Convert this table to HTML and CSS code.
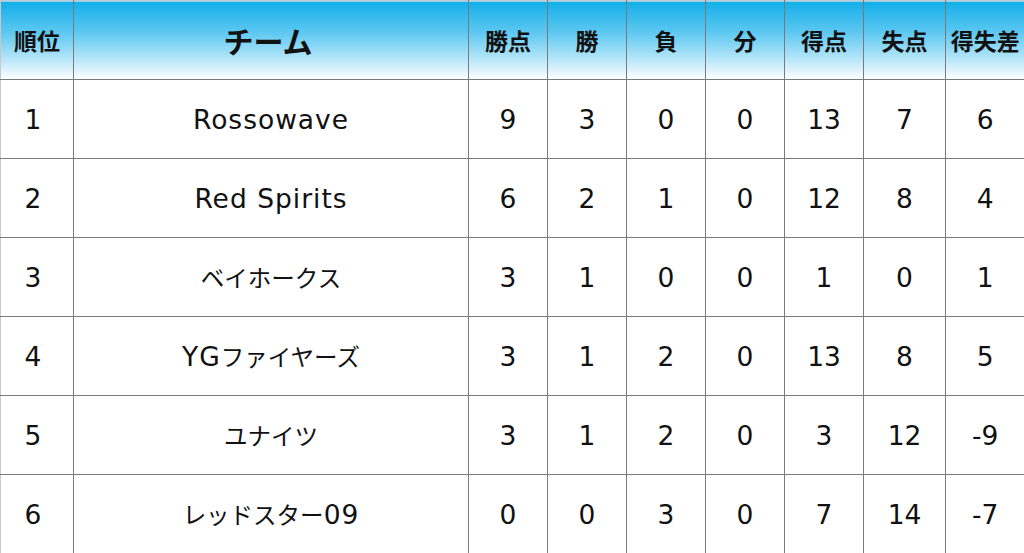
FILE: index.html
```html
<!DOCTYPE html>
<html lang="ja">
<head>
<meta charset="utf-8">
<link rel="stylesheet" href="styles.css">
</head>
<body>
<table class="standings">
  <colgroup>
    <col class="c-rank"><col class="c-team"><col class="c-n"><col class="c-n"><col class="c-n"><col class="c-n"><col class="c-n"><col class="c-n2"><col class="c-n3">
  </colgroup>
  <thead>
    <tr>
      <th>順位</th><th class="team-h">チーム</th><th>勝点</th><th>勝</th><th>負</th><th>分</th><th>得点</th><th>失点</th><th>得失差</th>
    </tr>
  </thead>
  <tbody>
    <tr><td class="rank">1</td><td class="team">Rossowave</td><td>9</td><td>3</td><td>0</td><td>0</td><td>13</td><td>7</td><td>6</td></tr>
    <tr><td class="rank">2</td><td class="team">Red Spirits</td><td>6</td><td>2</td><td>1</td><td>0</td><td>12</td><td>8</td><td>4</td></tr>
    <tr><td class="rank">3</td><td class="team"><span class="jp">ベイホークス</span></td><td>3</td><td>1</td><td>0</td><td>0</td><td>1</td><td>0</td><td>1</td></tr>
    <tr><td class="rank">4</td><td class="team">YG<span class="jp">ファイヤーズ</span></td><td>3</td><td>1</td><td>2</td><td>0</td><td>13</td><td>8</td><td>5</td></tr>
    <tr><td class="rank">5</td><td class="team"><span class="jp">ユナイツ</span></td><td>3</td><td>1</td><td>2</td><td>0</td><td>3</td><td>12</td><td>-9</td></tr>
    <tr><td class="rank">6</td><td class="team"><span class="jp">レッドスター</span>09</td><td>0</td><td>0</td><td>3</td><td>0</td><td>7</td><td>14</td><td>-7</td></tr>
  </tbody>
</table>
</body>
</html>
```
FILE: styles.css
```css
html, body {
  margin: 0;
  padding: 0;
  background: #fff;
}
body {
  width: 1024px;
  height: 553px;
  overflow: hidden;
  font-family: "DejaVu Sans", "Noto Sans CJK JP", sans-serif;
  color: #111;
}
.standings {
  width: 1024px;
  table-layout: fixed;
  border-collapse: collapse;
  border-top: 1px solid #c8c8c8;
  border-left: 1px solid #c8c8c8;
}
.c-rank { width: 73px; }
.c-team { width: 395px; }
.c-n { width: 79px; }
.c-n2 { width: 82px; }
.c-n3 { width: 79px; }
th, td {
  border: 1px solid #7a7a7a;
  text-align: center;
  vertical-align: middle;
  padding: 0;
  white-space: nowrap;
}
tr > :first-child { border-left-color: #c8c8c8; }
tr > :last-child { border-right: none; }
thead th {
  height: 78px;
  font-family: "Noto Sans CJK JP", sans-serif;
  font-size: 23px;
  font-weight: bold;
  border-top: none;
  background: linear-gradient(to bottom, #12aeea 0%, #5ec8f1 40%, #b9e7f9 75%, #ffffff 100%);
}
thead th.team-h {
  font-size: 30px;
  padding-right: 6px;
}
tbody td {
  height: 75px;
  font-size: 26.5px;
  font-weight: normal;
  line-height: 1;
  padding-top: 3px;
}
tbody td.rank {
  padding-right: 8px;
}
tbody td.team {
  letter-spacing: 1px;
}
.jp {
  font-family: "Noto Sans CJK JP", sans-serif;
  font-size: 23.5px;
  letter-spacing: 0;
}
```
